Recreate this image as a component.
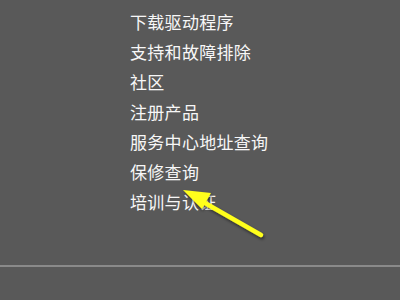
const links = [
  "下载驱动程序",
  "支持和故障排除",
  "社区",
  "注册产品",
  "服务中心地址查询",
  "保修查询",
  "培训与认证",
];

export default function App() {
  return (
    <div className="relative w-[400px] h-[300px] bg-[#595959] overflow-hidden font-['Liberation_Sans','Noto_Sans_CJK_SC',sans-serif]">
      <ul className="pt-[9px] pl-[130px]">
        {links.map((t) => (
          <li key={t} className="text-[17px] tracking-[0.3px] leading-[30px] text-[#f7f7f7]">
            {t}
          </li>
        ))}
      </ul>
      <div className="absolute left-0 right-0 top-[265px] h-[2px] bg-[#8a8a8a]" />
      {/* highlight arrow */}
      <svg className="absolute left-0 top-0" width="400" height="300" viewBox="0 0 400 300">
        <defs>
          <filter id="sh" x="-20%" y="-20%" width="140%" height="140%">
            <feDropShadow dx="1" dy="2" stdDeviation="1.5" floodColor="#000" floodOpacity="0.5" />
          </filter>
        </defs>
        <g filter="url(#sh)">
          <line x1="261" y1="235" x2="198" y2="199" stroke="#ffff1a" strokeWidth="4.5" strokeLinecap="round" />
          <polygon points="183,190 211,193 202,209" fill="#ffff1a" />
        </g>
      </svg>
    </div>
  );
}
